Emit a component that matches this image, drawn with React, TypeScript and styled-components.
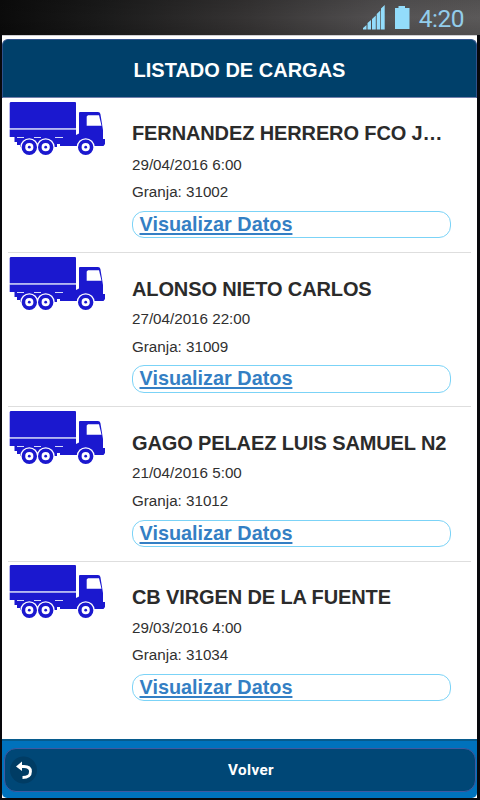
import React from "react";
import styled, { createGlobalStyle } from "styled-components";

const Global = createGlobalStyle`
  * { box-sizing: border-box; }
  body { margin: 0; background: #000; }
`;

const Screen = styled.div`
  width: 480px;
  height: 800px;
  display: flex;
  flex-direction: column;
  overflow: hidden;
  background: #08080c;
  font-family: "Liberation Sans", Arial, sans-serif;
`;

const StatusBar = styled.div`
  height: 35px;
  flex: none;
  display: flex;
  justify-content: flex-end;
  align-items: flex-start;
  padding: 5px 16px 0 0;
  background:
    linear-gradient(to bottom, rgba(0, 0, 0, 0.1), rgba(0, 0, 0, 0) 50%, rgba(0, 0, 0, 0.12)),
    linear-gradient(to right, #0b0b0b 0%, #1b1b1b 22%, #363434 52%, #555354 82%, #5b5959 100%);
`;

const StatusIcons = styled.svg`
  width: 50px;
  height: 26px;
  margin-right: 6px;
  fill: #93dcfb;
`;

const Clock = styled.span`
  font: 400 24.5px/27px Roboto, sans-serif;
  letter-spacing: -0.5px;
  color: #93cdeb;
`;

const Page = styled.main`
  height: 763px;
  margin: 0 3px 0 2px;
  display: flex;
  flex-direction: column;
  background: #fff;
  padding-top: 3px;
  border-top: 1px solid #cfcfd3;
`;

const Header = styled.header`
  height: 59px;
  flex: none;
  display: flex;
  align-items: center;
  justify-content: center;
  padding-top: 2px;
  border: 1px solid #31528c;
  border-bottom: 1px solid #7380ac;
  border-radius: 6px 6px 0 0;
  background: #00406a;
`;

const Title = styled.h1`
  margin: 0;
  font-size: 20px;
  line-height: 24px;
  color: #fff;
`;

const List = styled.ul`
  flex: 1;
  margin: 0 6px 0 6px;
  padding: 0.6px 0 0;
  list-style: none;
`;

const Row = styled.li`
  height: 154.33px;
  display: flex;
  border-bottom: 1px solid #dedede;

  &:last-child { border-bottom-color: transparent; }
`;

const TruckSvg = styled.svg`
  width: 98px;
  height: 54px;
  margin: 3.6px 0 0 1px;
  flex: none;
`;

const Details = styled.div<{ $top: number }>`
  width: 319px;
  margin-left: 25px;
  padding-top: ${(p) => p.$top}px;
  color: #303030;
`;

const Name = styled.h2<{ $gap: number }>`
  margin: 0 0 ${(p) => p.$gap}px;
  font-size: 20px;
  letter-spacing: -0.12px;
  line-height: 24px;
  white-space: nowrap;
  color: #2b2b2b;
`;

const Info = styled.p`
  margin: 0;
  height: 27.7px;
  font-size: 15.2px;
  line-height: 20px;
`;

const LinkBox = styled.div`
  height: 27.5px;
  margin-top: 0.9px;
  padding-left: 6.5px;
  border: 1.5px solid #7bd3f7;
  border-radius: 12px;
`;

const DataLink = styled.a`
  display: block;
  font-size: 19.85px;
  font-weight: 700;
  line-height: 25px;
  color: #347fc4;
  text-decoration: underline;
  text-decoration-thickness: 1.5px;
  text-underline-offset: 1.5px;
`;

const Footer = styled.footer`
  height: 59px;
  flex: none;
  padding: 7px 1px 6px 2px;
  border-top: 2px solid #075b8d;
  border-radius: 0 0 5px 5px;
  background: #0072bc;
`;

const BackButton = styled.button`
  width: 100%;
  height: 44px;
  display: grid;
  grid-template-columns: 40px 1fr 18px;
  align-items: center;
  padding: 0;
  border: 1px solid #4058a0;
  border-radius: 12px;
  background: #004776;
  color: #fff;
`;

const BackIcon = styled.svg`
  width: 28px;
  height: 28px;
  margin-left: 5px;
`;

const BackLabel = styled.span`
  font: 700 15.2px/20px Roboto, sans-serif;
  letter-spacing: 0.4px;
`;

const Truck = () => (
  <TruckSvg viewBox="0 0 98 54">
    <g fill="#1b18cf">
      <path d="M1.5 0H66a1 1 0 0 1 1 1V26H.7V1Z" />
      <path d="M.7 27.500H67V33L70 31.500V11q0-1 1-1H89Q91 10 91.400 12L94 28V37H96V42L94.500 44H51V42H48V45H11V43H8V40H5.500V35H.7Z" />
    </g>
    <path d="M.7 26.700H67" stroke="#b4b8f0" strokeWidth="1.600" />
    <path d="M79 13.200H90L92.500 23.800H77.700V14.500Z" fill="#fff" />
    <path d="M8 35.500h7M25 35.500h7M46 35.500h8" stroke="#d5d9fa" strokeWidth="1.200" />
    {[20.3, 36.7, 76.7].map((x) => (
      <circle key={x} cx={x} cy="45.200" r="9" fill="#fff" />
    ))}
    {[20.3, 36.7, 76.7].map((x) => (
      <g key={x}>
        <circle cx={x} cy="45.200" r="5.900" fill="#fff" stroke="#1b18cf" strokeWidth="3.600" />
        <circle cx={x} cy="45.200" r="1.400" fill="#1b18cf" />
      </g>
    ))}
  </TruckSvg>
);

const loads = [
  { name: "FERNANDEZ HERRERO FCO J…", date: "29/04/2016 6:00", farm: "31002", top: 22, gap: 10 },
  { name: "ALONSO NIETO CARLOS", date: "27/04/2016 22:00", farm: "31009", top: 24, gap: 8 },
  { name: "GAGO PELAEZ LUIS SAMUEL N2", date: "21/04/2016 5:00", farm: "31012", top: 23.4, gap: 8.8 },
  { name: "CB VIRGEN DE LA FUENTE", date: "29/03/2016 4:00", farm: "31034", top: 23.4, gap: 8.6 },
];

export default function App() {
  return (
    <>
      <Global />
      <Screen>
        <StatusBar>
          <StatusIcons viewBox="0 0 50 26">
            <path d="M0 24.500V23L3.500 20V24.500ZM4.500 24.500V18L8 15V24.500ZM9 24.500V14L12.800 10.500V24.500ZM13.700 24.500V9L17.300 5.500V24.500ZM18 24.500V3.500L21.700 0V24.500Z" />
            <path d="M32 3H35.500V1H42V3H46.500V24H32Z" />
          </StatusIcons>
          <Clock>4:20</Clock>
        </StatusBar>
        <Page>
          <Header>
            <Title>LISTADO DE CARGAS</Title>
          </Header>
          <List>
            {loads.map((load) => (
              <Row key={load.farm}>
                <Truck />
                <Details $top={load.top}>
                  <Name $gap={load.gap}>{load.name}</Name>
                  <Info>{load.date}</Info>
                  <Info>Granja: {load.farm}</Info>
                  <LinkBox>
                    <DataLink>Visualizar Datos</DataLink>
                  </LinkBox>
                </Details>
              </Row>
            ))}
          </List>
          <Footer>
            <BackButton>
              <BackIcon viewBox="0 0 28 28">
                <circle cx="13.500" cy="14" r="13.500" fill="#003c64" />
                <path d="M9.500 10.500H14Q20.500 10.500 20.500 15.500Q20.500 21.500 12.500 21.500" fill="none" stroke="#fff" strokeWidth="2.800" />
                <path d="M12 5.500V15L6 10.500Z" fill="#fff" />
              </BackIcon>
              <BackLabel>Volver</BackLabel>
            </BackButton>
          </Footer>
        </Page>
      </Screen>
    </>
  );
}
